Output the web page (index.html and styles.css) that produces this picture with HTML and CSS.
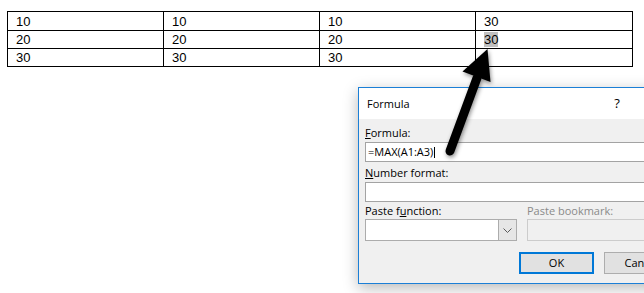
FILE: index.html
```html
<!DOCTYPE html>
<html>
<head>
<meta charset="utf-8">
<link rel="stylesheet" href="styles.css">
</head>
<body>
<table class="doc-table">
  <colgroup><col class="c"><col class="c"><col class="c"><col class="c-last"></colgroup>
  <tr><td>10</td><td>10</td><td>10</td><td>30</td></tr>
  <tr><td>20</td><td>20</td><td>20</td><td><span class="sel">30</span></td></tr>
  <tr><td>30</td><td>30</td><td>30</td><td></td></tr>
</table>

<div class="dialog">
  <div class="titlebar">
    <span class="title">Formula</span>
    <span class="help">?</span>
    <span class="close"></span>
  </div>
  <div class="body">
    <label class="lbl"><u>F</u>ormula:</label>
    <div class="field"><span class="value">=MAX(A1:A3)</span><span class="caret"></span></div>
    <label class="lbl lbl-gap"><u>N</u>umber format:</label>
    <div class="field"></div>
    <div class="pair">
      <div class="col">
        <label class="lbl lbl-gap2">Paste f<u>u</u>nction:</label>
        <div class="combo">
          <div class="combo-text"></div>
          <div class="combo-btn">
            <svg width="9" height="5" viewBox="0 0 9 5"><polyline points="0.5,0.5 4.5,4.5 8.5,0.5" fill="none" stroke="#5a5a5a" stroke-width="1"/></svg>
          </div>
        </div>
      </div>
      <div class="col">
        <label class="lbl lbl-gap2 disabled">Paste bookmark:</label>
        <div class="combo disabled-box"></div>
      </div>
    </div>
    <div class="buttons">
      <button class="btn btn-default">OK</button>
      <button class="btn">Cancel</button>
    </div>
  </div>
</div>

<svg class="arrow" width="644" height="293" viewBox="0 0 644 293">
  <defs>
    <filter id="sh" x="-50%" y="-50%" width="200%" height="200%">
      <feDropShadow dx="1" dy="2" stdDeviation="2.2" flood-color="#000" flood-opacity="0.45"/>
    </filter>
  </defs>
  <g filter="url(#sh)">
    <line x1="450" y1="151" x2="477" y2="78" stroke="#000" stroke-width="9" stroke-linecap="round"/>
    <polygon points="487.5,49 462.5,71.5 490.5,82" fill="#000"/>
  </g>
</svg>
</body>
</html>
```
FILE: styles.css
```css
html, body {
  margin: 0;
  padding: 0;
  background: #fff;
  overflow: hidden;
  width: 644px;
  height: 293px;
}

body {
  position: relative;
  padding: 11px 0 0 7px;
  box-sizing: border-box;
}

.doc-table {
  border-collapse: collapse;
  table-layout: fixed;
  width: 626px;
  font-family: "Liberation Sans", Arial, sans-serif;
  font-size: 13px;
  color: #000;
}

.doc-table .c { width: 156px; }
.doc-table .c-last { width: 157px; }

.doc-table td {
  border: 1px solid #000;
  padding: 0 8px;
  height: 17px;
  line-height: 15px;
  vertical-align: middle;
}

.doc-table tr:first-child td { height: 18px; }

.sel {
  background: #c0c0c0;
  display: inline-block;
  line-height: 15px;
}

/* Dialog */
.dialog {
  position: absolute;
  left: 358px;
  top: 87px;
  width: 322px;
  height: 197px;
  box-sizing: border-box;
  border: 1px solid #1b7fd6;
  background: #f0f0f0;
  box-shadow: 0 4px 14px rgba(0, 0, 0, 0.28);
  font-family: "Open Sans", "Noto Sans", sans-serif;
  font-size: 11px;
  color: #000;
}

.titlebar {
  display: flex;
  align-items: center;
  height: 31px;
  background: #fff;
  padding-left: 8px;
}

.title {
  flex: 1;
  line-height: 31px;
}

.help {
  width: 24px;
  text-align: center;
  font-size: 13px;
  line-height: 31px;
  margin-right: 4px;
}

.close {
  width: 46px;
}

.body {
  padding: 6px 0 0 6px;
}

.lbl {
  display: block;
  line-height: 16px;
  height: 16px;
  margin-bottom: 1px;
  white-space: nowrap;
}

.lbl-gap { margin-top: 3px; }
.lbl-gap2 { margin-top: 1px; margin-bottom: 0; }

.lbl.disabled { color: #8a8a8a; }

.field {
  height: 20px;
  box-sizing: border-box;
  border: 1px solid #a3a3a3;
  background: #fff;
  display: flex;
  align-items: center;
  padding-left: 2px;
}

.value {
  line-height: 16px;
}

.caret {
  width: 1px;
  height: 11px;
  background: #000;
  margin-left: 1px;
}

.pair {
  display: grid;
  grid-template-columns: 152px 1fr;
  column-gap: 10px;
}

.combo {
  height: 22px;
  box-sizing: border-box;
  border: 1px solid #acacac;
  background: #fff;
  display: flex;
}

.combo-text { flex: 1; }

.combo-btn {
  width: 17px;
  background: #e6e6e6;
  border-left: 1px solid #acacac;
  display: flex;
  align-items: center;
  justify-content: center;
}

.combo.disabled-box {
  background: #f0f0f0;
  border-color: #cccccc;
}

.buttons {
  display: flex;
  column-gap: 10px;
  margin-top: 11px;
  padding-left: 154px;
}

.btn {
  height: 22px;
  box-sizing: border-box;
  width: 75px;
  background: #e1e1e1;
  border: 1px solid #adadad;
  font-family: "Open Sans", "Noto Sans", sans-serif;
  font-size: 11px;
  color: #000;
  padding: 0;
  line-height: 18px;
  text-align: center;
  flex-shrink: 0;
}

.btn-default {
  border: 2px solid #0078d7;
}

.arrow {
  position: absolute;
  left: 0;
  top: 0;
  pointer-events: none;
}
```
